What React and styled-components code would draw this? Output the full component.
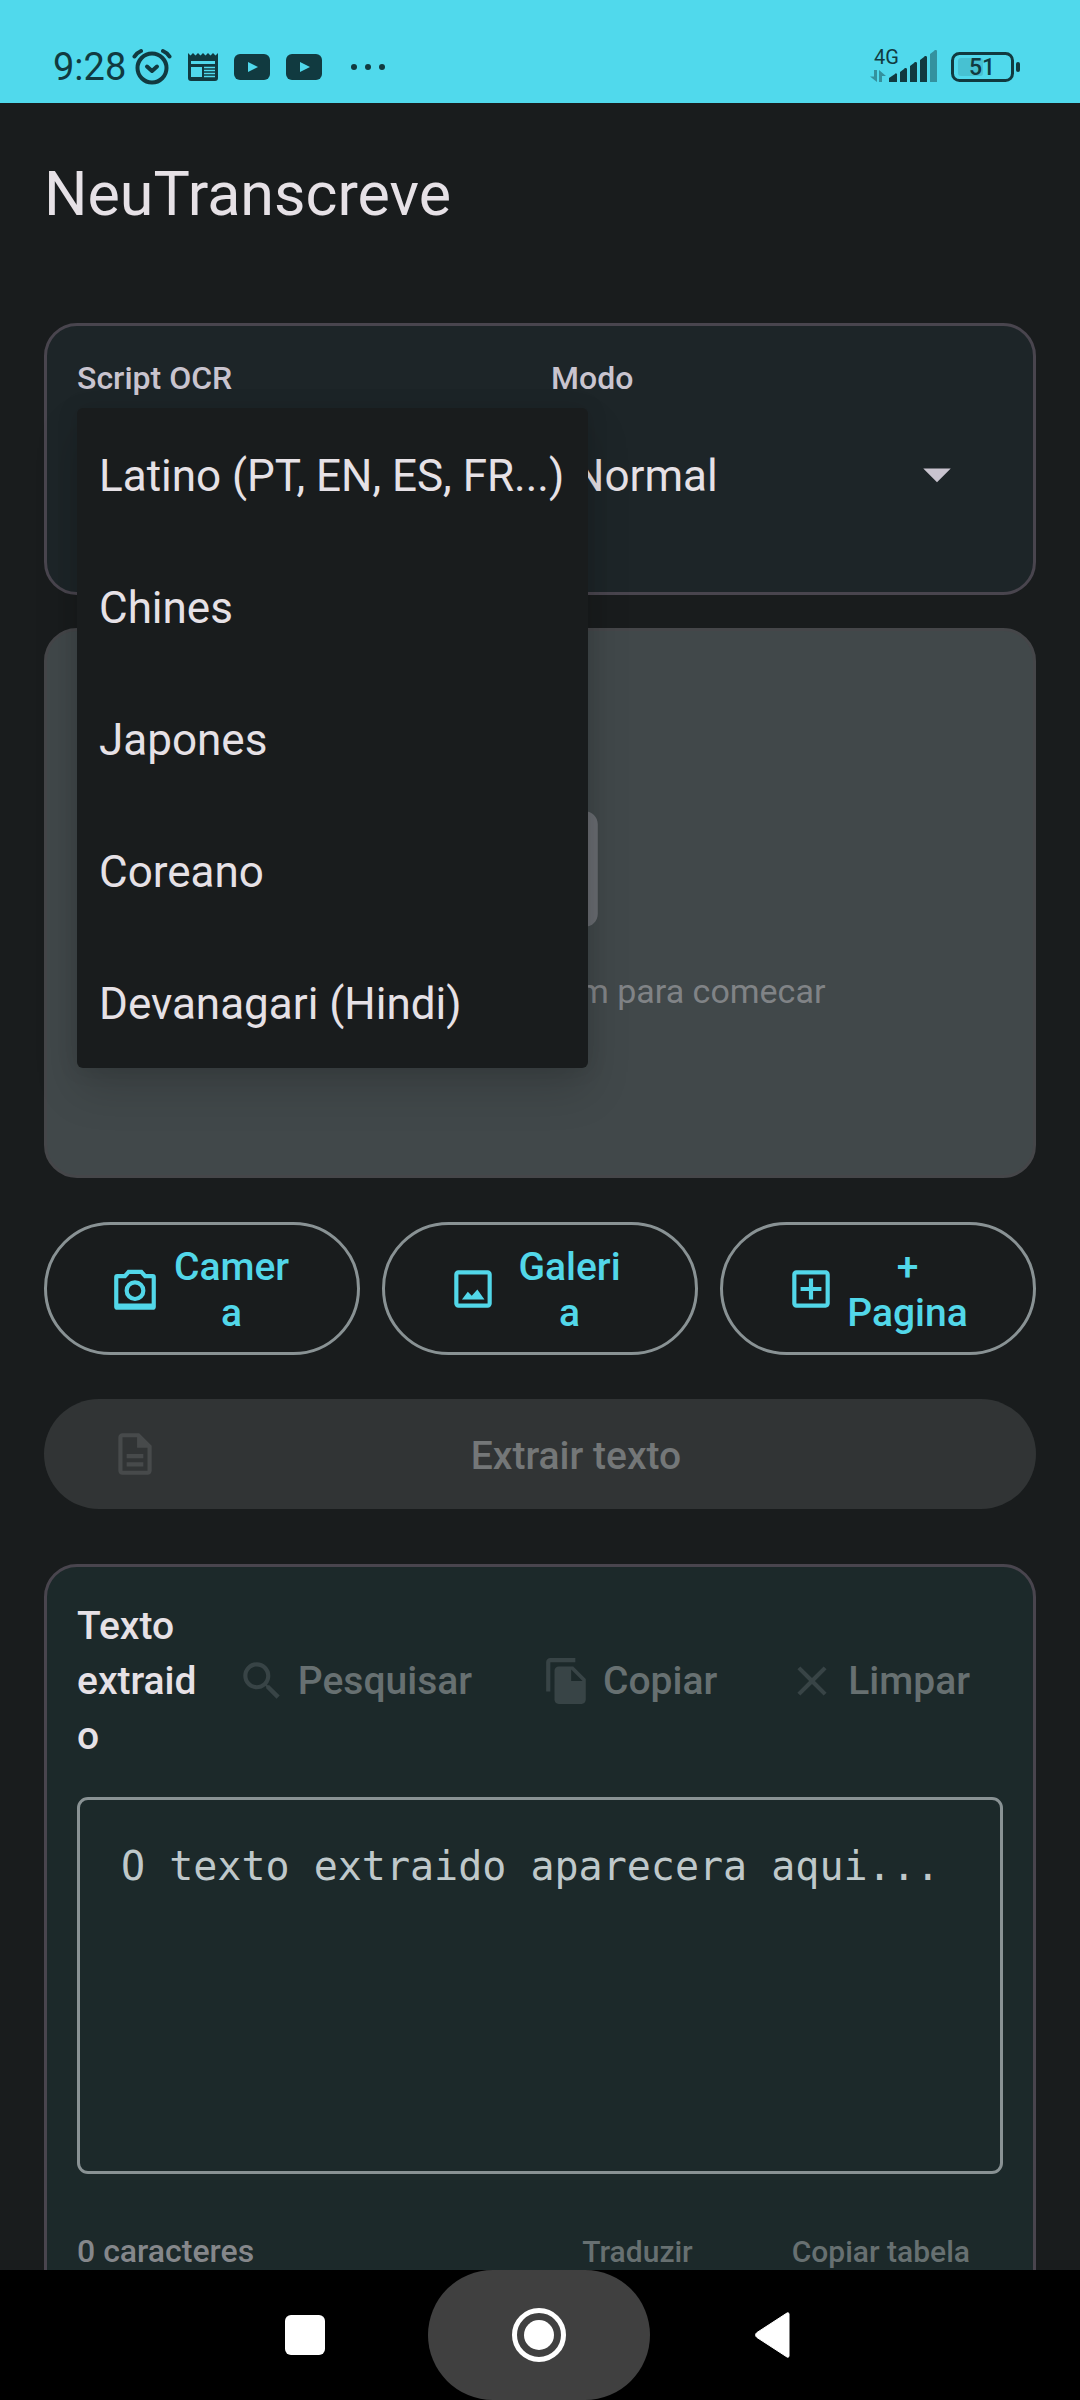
import { useState } from 'react'
import styled, { createGlobalStyle } from 'styled-components'
import {
    MdClose,
    MdFileCopy,
    MdImage,
    MdOutlineAddBox,
    MdOutlineDescription,
    MdSearch,
} from 'react-icons/md'

const scripts = [
    'Latino (PT, EN, ES, FR...)',
    'Chines',
    'Japones',
    'Coreano',
    'Devanagari (Hindi)',
]

export default function App() {
    const [script, setScript] = useState(scripts[0])
    const [open, setOpen] = useState(true)

    const choose = (name) => {
        setScript(name)
        setOpen(false)
    }

    return (
        <Screen>
            <GlobalStyle />
            <StatusBar />
            <Content>
                <Title>NeuTranscreve</Title>

                <OptionsCard>
                    <Field>
                        <Label htmlFor="script">Script OCR</Label>
                        <SelectWrap>
                            <Select
                                id="script"
                                value={script}
                                onChange={(e) => setScript(e.target.value)}
                                onClick={() => setOpen(true)}
                            >
                                {scripts.map((name) => <option key={name}>{name}</option>)}
                            </Select>
                            <Caret />
                            {open && (
                                <Menu>
                                    {scripts.map((name) => (
                                        <MenuItem key={name} onClick={() => choose(name)}>{name}</MenuItem>
                                    ))}
                                </Menu>
                            )}
                        </SelectWrap>
                    </Field>
                    <Field>
                        <Label htmlFor="mode">Modo</Label>
                        <SelectWrap>
                            <Select id="mode" defaultValue="Normal">
                                <option>Normal</option>
                            </Select>
                            <Caret />
                        </SelectWrap>
                    </Field>
                </OptionsCard>

                <Preview>
                    <MdImage size={154} />
                    <Hint>Selecione uma imagem para comecar</Hint>
                </Preview>

                <Sources>
                    <SourceButton>
                        <CameraIcon />
                        <span>{'Camer\na'}</span>
                    </SourceButton>
                    <SourceButton>
                        <GalleryIcon />
                        <span>{'Galeri\na'}</span>
                    </SourceButton>
                    <SourceButton>
                        <MdOutlineAddBox size={50} />
                        <span>{'+\nPagina'}</span>
                    </SourceButton>
                </Sources>

                <ExtractButton disabled>
                    <MdOutlineDescription size={50} />
                    <span>Extrair texto</span>
                </ExtractButton>

                <ResultCard>
                    <ResultHead>
                        <ResultTitle htmlFor="result">{'Texto\nextraid\no'}</ResultTitle>
                        <Actions>
                            <TextButton disabled><MdSearch size={50} />Pesquisar</TextButton>
                            <TextButton disabled><MdFileCopy size={50} />Copiar</TextButton>
                            <TextButton disabled><MdClose size={50} />Limpar</TextButton>
                        </Actions>
                    </ResultHead>
                    <ResultText id="result" placeholder="O texto extraido aparecera aqui..." />
                    <ResultFoot>
                        <Count>0 caracteres</Count>
                        <SmallButton disabled>Traduzir</SmallButton>
                        <SmallButton disabled>Copiar tabela</SmallButton>
                    </ResultFoot>
                </ResultCard>
            </Content>
            <NavBar>
                <NavButton aria-label="Recentes">
                    <svg width="40" height="40"><rect width="40" height="40" rx="6" fill="#fff" /></svg>
                </NavButton>
                <NavButton aria-label="Inicio" $pressed>
                    <svg width="56" height="56" viewBox="0 0 56 56">
                        <circle cx="28" cy="28" r="24.5" fill="none" stroke="#fff" strokeWidth="5" />
                        <circle cx="28" cy="28" r="15" fill="#fff" />
                    </svg>
                </NavButton>
                <NavButton aria-label="Voltar">
                    <svg width="36" height="46" viewBox="0 0 36 46">
                        <path d="M34 1.5v43a1.5 1.5 0 0 1-2 .5L2 25.5a3 3 0 0 1 0-5L32 1a1.5 1.5 0 0 1 2 .5z" fill="#fff" stroke="#fff" />
                    </svg>
                </NavButton>
            </NavBar>
        </Screen>
    )
}

function StatusBar() {
    return (
        <Status>
            <Time>9:28</Time>
            <StatusIcons>
                <svg width="40" height="38" viewBox="0 0 40 38">
                    <g fill="none" stroke="#113a40" strokeWidth="4" strokeLinecap="round" strokeLinejoin="round">
                        <circle cx="20" cy="20" r="14.5" />
                        <path d="M2.5 8.5c1.5-2.5 4-4.5 6.5-5.500M37.5 8.5c-1.5-2.5-4-4.5-6.5-5.5" />
                        <path d="M15 18.5l5 4.5 5-4.5" />
                    </g>
                </svg>
                <svg width="30" height="28" viewBox="0 0 30 28">
                    <path d="M0 0l2.5 2.5L5 0l2.5 2.5L10 0l2.5 2.5L15 0l2.5 2.5L20 0l2.5 2.5L25 0l2.5 2.5L30 0v25a3 3 0 0 1-3 3H3a3 3 0 0 1-3-3z" fill="#113a40" />
                    <path d="M3 8h24v3H3zM3 14h11v10H3z" fill="#50d9ec" />
                    <path d="M16 14.5h11M16 17.5h11M16 20.5h11M16 23.5h11" stroke="#50d9ec" strokeWidth="1.5" />
                </svg>
                <VideoIcon />
                <VideoIcon />
                <Dots width="36" height="6" viewBox="0 0 36 6">
                    <circle cx="4" cy="3" r="3" />
                    <circle cx="18" cy="3" r="3" />
                    <circle cx="32" cy="3" r="3" />
                </Dots>
            </StatusIcons>
            <svg width="67" height="44" viewBox="0 -5 67 44" fill="#113a40">
                <text x="4" y="14" fontSize="20">4G</text>
                <path d="M7 20v12L0 26.5h4V20zM9 32V20l7 6h-4v6z" opacity="0.45" />
                <path d="M19 28l6-4a1 1 0 0 1 2 1v7H19zM30 22l4-3a1 1 0 0 1 3 1v12h-7zM40 16l4-3a1 1 0 0 1 3 1v18h-7zM50 10l4-3a1 1 0 0 1 3 1v24h-7z" />
                <path d="M60 4l4-3a1 1 0 0 1 3 1v30h-7z" opacity="0.45" />
            </svg>
            <svg width="69" height="30" viewBox="0 0 69 30" fill="#113a40">
                <rect x="1.5" y="1.5" width="60" height="27" rx="7" fill="none" stroke="#113a40" strokeWidth="3" />
                <rect x="7" y="6" width="25" height="18" rx="3" opacity="0.15" />
                <rect x="65" y="10" width="4" height="10" rx="2" />
                <text x="31" y="23" fontSize="23" fontWeight="500" textAnchor="middle">51</text>
            </svg>
        </Status>
    )
}

function VideoIcon() {
    return (
        <svg width="36" height="26" viewBox="0 0 36 26">
            <rect width="36" height="26" rx="6" fill="#113a40" />
            <path d="M14 8l10 5-10 5z" fill="#50d9ec" />
        </svg>
    )
}

function Caret() {
    return (
        <CaretIcon width="66" height="66" viewBox="0 0 24 24">
            <path d="M7 10l5 5 5-5z" />
        </CaretIcon>
    )
}

function CameraIcon() {
    return (
        <svg width="50" height="50" viewBox="0 0 24 24" fill="currentColor" fillRule="evenodd">
            <path d="M8.5 2.8h7L17.3 4.8H20.5A1.5 1.5 0 0 1 22 6.3V20.5A1.5 1.5 0 0 1 20.5 22H3.5A1.5 1.5 0 0 1 2 20.5V6.3A1.5 1.5 0 0 1 3.5 4.8H6.7zM4 6.8V19H20V6.8H16.4L14.6 4.8H9.4L7.6 6.8z" />
            <circle cx="12" cy="12.8" r="4" fill="none" stroke="currentColor" strokeWidth="2" />
        </svg>
    )
}

function GalleryIcon() {
    return (
        <svg width="50" height="50" viewBox="0 0 24 24" fill="currentColor">
            <rect x="4" y="4" width="16" height="16" rx="1" fill="none" stroke="currentColor" strokeWidth="2" />
            <path d="M6.7 17l2.8-3.7 1.9 1.9 2.7-3L17.5 17z" />
        </svg>
    )
}

const GlobalStyle = createGlobalStyle`
    * {
        box-sizing: border-box;
    }
    body {
        margin: 0;
        background: #191c1d;
    }
    body, button, select {
        font-family: Roboto, sans-serif;
    }
    svg {
        display: block;
        flex: none;
    }
`
const Screen = styled.div`
    display: flex;
    flex-direction: column;
    height: 100vh;
    overflow: hidden;
`
const Status = styled.header`
    display: flex;
    align-items: center;
    flex: none;
    height: 103px;
    padding: 30px 60px 0 53px;
    gap: 14px;
    background: #50d9ec;
    color: #113a40;
`
const Time = styled.span`
    font-size: 38px;
    line-height: 46px;
`
const StatusIcons = styled.div`
    display: flex;
    align-items: center;
    flex: 1;
    gap: 16px;
    margin-left: -8px;
`
const Dots = styled.svg`
    margin-left: 12px;
    fill: #113a40;
`
const Content = styled.main`
    flex: 1;
    min-height: 0;
    overflow: hidden;
    padding: 0 44px;
`
const Title = styled.h1`
    margin: 0;
    padding: 53px 0 90px;
    font-size: 61px;
    font-weight: 400;
    line-height: 77px;
    color: #e6e1e6;
`
const OptionsCard = styled.section`
    display: grid;
    grid-template-columns: 1fr 1fr;
    gap: 22px;
    padding: 30px;
    border: 3px solid #49454e;
    border-radius: 33px;
    background: #1d2528;
`
const Field = styled.div`
    display: flex;
    flex-direction: column;
    gap: 8px;
    min-width: 0;
`
const Label = styled.label`
    font-size: 32px;
    font-weight: 500;
    line-height: 44px;
    color: #c9c4cf;
`
const SelectWrap = styled.div`
    position: relative;
`
const Select = styled.select`
    display: block;
    width: 100%;
    height: 154px;
    padding: 4px 99px 22px 22px;
    border: 0;
    outline: 0;
    appearance: none;
    background: transparent;
    font-size: 44px;
    color: #e6e1e6;
`
const CaretIcon = styled.svg`
    position: absolute;
    top: 33px;
    right: 33px;
    fill: #c9c4cf;
    pointer-events: none;
`
const Menu = styled.div`
    position: absolute;
    top: 0;
    left: 0;
    z-index: 2;
    min-width: 113%;
    border-radius: 6px;
    background: #191c1d;
    box-shadow: 0 22px 44px rgba(0, 0, 0, 0.15), 0 0 22px rgba(0, 0, 0, 0.1);
`
const MenuItem = styled.button`
    display: block;
    width: 100%;
    height: 132px;
    padding: 4px 22px 0;
    border: 0;
    background: transparent;
    font-size: 44px;
    text-align: left;
    white-space: nowrap;
    color: #e6e1e6;
`
const Preview = styled.section`
    display: flex;
    flex-direction: column;
    align-items: center;
    justify-content: center;
    gap: 22px;
    height: 550px;
    margin-top: 33px;
    border: 3px solid #454649;
    border-radius: 33px;
    background: #41484a;
    color: #696c71;
`
const Hint = styled.p`
    margin: 0;
    font-size: 34px;
    line-height: 46px;
    color: #808386;
`
const Sources = styled.div`
    display: grid;
    grid-template-columns: repeat(3, 1fr);
    gap: 22px;
    margin-top: 44px;
`
const SourceButton = styled.button`
    display: flex;
    align-items: center;
    gap: 9px;
    height: 133px;
    padding: 0 63px;
    border: 3px solid #899294;
    border-radius: 67px;
    background: transparent;
    font-size: 39px;
    font-weight: 500;
    line-height: 46px;
    color: #52d7e9;

    span {
        flex: 1;
        padding-top: 3px;
        white-space: pre-line;
    }
`
const ExtractButton = styled.button`
    display: flex;
    align-items: center;
    gap: 22px;
    width: 100%;
    height: 110px;
    margin-top: 44px;
    padding: 0 66px;
    border: 0;
    border-radius: 55px;
    background: #313435;
    font-size: 39px;
    font-weight: 500;
    color: #747778;

    svg {
        color: #474a4b;
    }
    span {
        flex: 1;
        padding-top: 3px;
    }
`
const ResultCard = styled.section`
    margin-top: 55px;
    padding: 30px;
    border: 3px solid #49454e;
    border-radius: 33px;
    background: #1c292a;
`
const ResultHead = styled.div`
    display: flex;
    align-items: center;
    justify-content: space-between;
`
const ResultTitle = styled.label`
    padding-top: 2px;
    font-size: 39px;
    font-weight: 500;
    line-height: 55px;
    white-space: pre-line;
    color: #e6e1e6;
`
const Actions = styled.div`
    display: flex;
    gap: 4px;
`
const TextButton = styled.button`
    display: flex;
    align-items: center;
    gap: 11px;
    height: 110px;
    padding: 0 33px;
    border: 0;
    background: transparent;
    font-size: 39px;
    font-weight: 500;
    color: #677071;

    svg {
        color: #384446;
    }
`
const ResultText = styled.textarea`
    display: block;
    width: 100%;
    height: 377px;
    margin-top: 33px;
    padding: 39px 41px;
    border: 3px solid #899294;
    border-radius: 11px;
    outline: 0;
    resize: none;
    background: transparent;
    font-family: 'DejaVu Sans Mono', monospace;
    font-size: 40px;
    line-height: 55px;
    color: #bfc8ca;

    &::placeholder {
        color: #bfc8ca;
    }
`
const ResultFoot = styled.div`
    display: flex;
    align-items: center;
    gap: 33px;
    height: 154px;
`
const Count = styled.span`
    flex: 1;
    font-size: 32px;
    font-weight: 500;
    color: #85878b;
`
const SmallButton = styled.button`
    padding: 33px;
    border: 0;
    background: transparent;
    font-size: 30px;
    font-weight: 500;
    color: #677071;
`
const NavBar = styled.nav`
    display: flex;
    justify-content: center;
    flex: none;
    gap: 12px;
    height: 130px;
    padding-right: 2px;
    background: #000;
`
const NavButton = styled.button`
    display: flex;
    align-items: center;
    justify-content: center;
    width: 222px;
    padding: 0;
    border: 0;
    border-radius: 65px;
    background: ${(props) => (props.$pressed ? '#404040' : 'transparent')};
`
